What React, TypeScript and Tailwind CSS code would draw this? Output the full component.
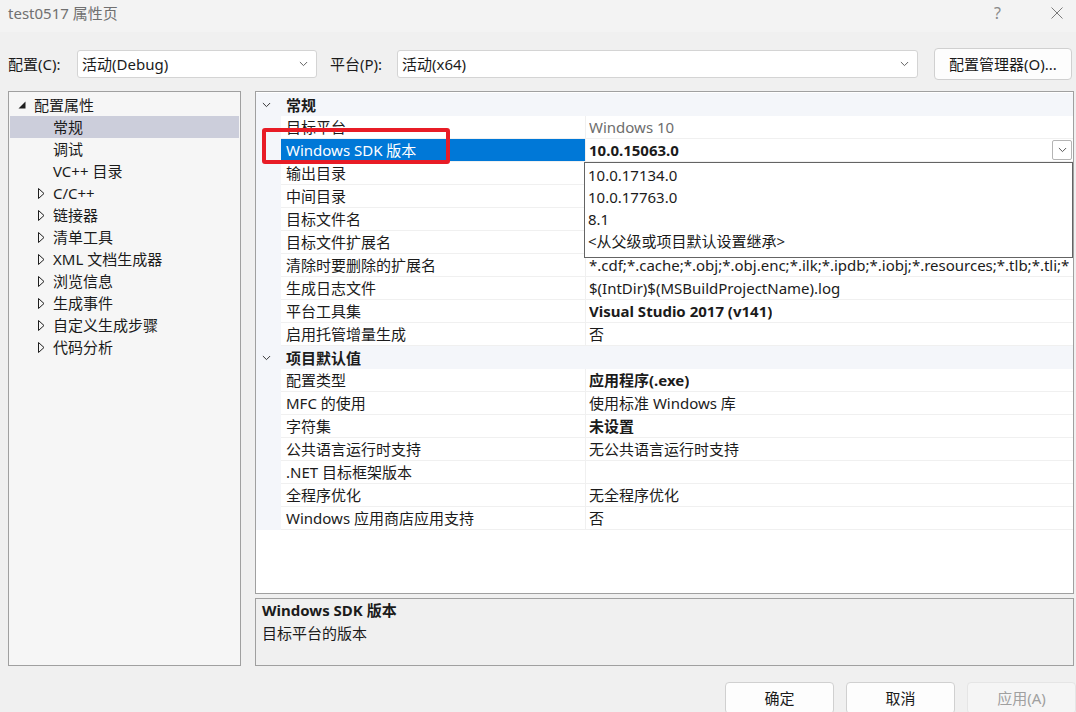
import React from "react";

const font = "font-['Noto_Sans','Noto_Sans_CJK_SC',sans-serif]";

type TreeItem = { label: string; collapsed?: boolean; selected?: boolean };

const treeItems: TreeItem[] = [
  { label: "常规", selected: true },
  { label: "调试" },
  { label: "VC++ 目录" },
  { label: "C/C++", collapsed: true },
  { label: "链接器", collapsed: true },
  { label: "清单工具", collapsed: true },
  { label: "XML 文档生成器", collapsed: true },
  { label: "浏览信息", collapsed: true },
  { label: "生成事件", collapsed: true },
  { label: "自定义生成步骤", collapsed: true },
  { label: "代码分析", collapsed: true },
];

type Row =
  | { kind: "cat"; label: string }
  | {
      kind: "prop";
      name: string;
      value: string;
      bold?: boolean;
      dim?: boolean;
      selected?: boolean;
    };

const rows: Row[] = [
  { kind: "cat", label: "常规" },
  { kind: "prop", name: "目标平台", value: "Windows 10", dim: true },
  { kind: "prop", name: "Windows SDK 版本", value: "10.0.15063.0", bold: true, selected: true },
  { kind: "prop", name: "输出目录", value: "" },
  { kind: "prop", name: "中间目录", value: "" },
  { kind: "prop", name: "目标文件名", value: "" },
  { kind: "prop", name: "目标文件扩展名", value: "" },
  {
    kind: "prop",
    name: "清除时要删除的扩展名",
    value: "*.cdf;*.cache;*.obj;*.obj.enc;*.ilk;*.ipdb;*.iobj;*.resources;*.tlb;*.tli;*",
  },
  { kind: "prop", name: "生成日志文件", value: "$(IntDir)$(MSBuildProjectName).log" },
  { kind: "prop", name: "平台工具集", value: "Visual Studio 2017 (v141)", bold: true },
  { kind: "prop", name: "启用托管增量生成", value: "否" },
  { kind: "cat", label: "项目默认值" },
  { kind: "prop", name: "配置类型", value: "应用程序(.exe)", bold: true },
  { kind: "prop", name: "MFC 的使用", value: "使用标准 Windows 库" },
  { kind: "prop", name: "字符集", value: "未设置", bold: true },
  { kind: "prop", name: "公共语言运行时支持", value: "无公共语言运行时支持" },
  { kind: "prop", name: ".NET 目标框架版本", value: "" },
  { kind: "prop", name: "全程序优化", value: "无全程序优化" },
  { kind: "prop", name: "Windows 应用商店应用支持", value: "否" },
];

const sdkOptions = ["10.0.17134.0", "10.0.17763.0", "8.1", "<从父级或项目默认设置继承>"];

function Chevron({ className }: { className?: string }) {
  return (
    <svg viewBox="0 0 10 6" className={className} fill="none" stroke="currentColor" strokeWidth="1.1">
      <path d="M1 0.8l4 4 4-4" />
    </svg>
  );
}

function Combo({ text, width }: { text: string; width: string }) {
  return (
    <div
      className={`${width} h-[28px] flex items-center justify-between bg-white border border-[#d4d4d4] rounded-[3px] pl-[4px] pr-[8px]`}
    >
      <span className="leading-[20px]">{text}</span>
      <Chevron className="w-[9px] h-[6px] text-[#606060]" />
    </div>
  );
}

export default function App() {
  return (
    <div
      className={`${font} relative w-[1076px] h-[712px] overflow-hidden bg-[#f0f0f0] text-[15px] text-[#1b1b1b] flex flex-col`}
    >
      {/* title bar */}
      <div className="h-[32px] shrink-0 flex justify-between bg-[#f3f3f3]">
        <span className="pl-[8px] pt-[4px] leading-[18px] text-[#707070]">test0517 属性页</span>
        <div className="flex items-center h-[26px] gap-[50px] pr-[13px] text-[#8a8a8a]">
          <span className="text-[16px] leading-none">?</span>
          <svg viewBox="0 0 12 12" className="w-[12px] h-[12px]" stroke="#7a7a7a" strokeWidth="1">
            <path d="M0.5 0.5l11 11M11.5 0.5l-11 11" />
          </svg>
        </div>
      </div>

      {/* config row */}
      <div className="mt-[16px] h-[32px] shrink-0 flex items-center pl-[8px]">
        <span className="w-[69px] leading-[20px]">配置(C):</span>
        <Combo text="活动(Debug)" width="w-[240px]" />
        <span className="ml-[13px] w-[67px] leading-[20px]">平台(P):</span>
        <Combo text="活动(x64)" width="w-[521px]" />
        <button className="ml-[16px] w-[138px] h-[32px] bg-[#fdfdfd] border border-[#d0d0d0] rounded-[4px] leading-[20px]">
          配置管理器(O)...
        </button>
      </div>

      {/* main */}
      <div className="mt-[11px] h-[575px] shrink-0 flex gap-[14px] pl-[8px]">
        {/* tree */}
        <div className="w-[233px] h-full border border-[#a0a0a0] bg-[#f6f6f6] pt-[2px] px-[1px]">
          <div className="h-[22px] flex items-center">
            <svg viewBox="0 0 8 8" className="ml-[8px] w-[8px] h-[8px]">
              <polygon points="7.5,0.5 7.5,7.5 0.5,7.5" fill="#1e1e1e" />
            </svg>
            <span className="ml-[8px] leading-[20px]">配置属性</span>
          </div>
          {treeItems.map((t) => (
            <div
              key={t.label}
              className={`h-[22px] flex items-center ${t.selected ? "bg-[#cccedb]" : ""}`}
            >
              {t.collapsed ? (
                <>
                  <svg viewBox="0 0 7 11" className="ml-[28px] w-[7px] h-[11px]">
                    <polygon points="0.5,0.5 6,5.5 0.5,10.5" fill="none" stroke="#1e1e1e" strokeWidth="1" />
                  </svg>
                  <span className="ml-[8px] leading-[20px]">{t.label}</span>
                </>
              ) : (
                <span className="ml-[43px] leading-[20px]">{t.label}</span>
              )}
            </div>
          ))}
        </div>

        {/* right column */}
        <div className="w-[819px] h-full flex flex-col gap-[4px]">
          <div className="h-[503px] border border-[#a0a0a0] bg-white pt-[1px] overflow-hidden">
            {rows.map((r, i) =>
              r.kind === "cat" ? (
                <div key={i} className="h-[23px] flex items-center bg-[#f4f6fa]">
                  <div className="w-[25px] pl-[6px]">
                    <Chevron className="w-[9px] h-[6px] text-[#333]" />
                  </div>
                  <span className="pl-[5px] font-bold leading-[20px]">{r.label}</span>
                </div>
              ) : (
                <div key={i} className="h-[23px] flex">
                  <div className="w-[25px] shrink-0 bg-[#f4f6fa]" />
                  <div
                    className={`w-[305px] shrink-0 flex items-center pl-[5px] border-b border-r border-[#f0f0f0] ${
                      r.selected ? "bg-[#0078d7] text-white border-[#0078d7]" : ""
                    }`}
                  >
                    <span className="leading-[20px] whitespace-nowrap">{r.name}</span>
                  </div>
                  <div className="relative flex-1 min-w-0 flex items-center pl-[3px] border-b border-[#f0f0f0]">
                    <span
                      className={`leading-[20px] whitespace-nowrap overflow-hidden ${r.bold ? "font-bold" : ""} ${
                        r.dim ? "text-[#6d6d6d]" : ""
                      }`}
                    >
                      {r.value}
                    </span>
                    {r.selected && (
                      <>
                        <div className="ml-auto mr-[1px] w-[20px] h-[20px] flex items-center justify-center border border-[#b4b4b4] rounded-[2px] bg-white">
                          <Chevron className="w-[9px] h-[6px] text-[#555]" />
                        </div>
                        <div className="absolute left-[-2px] top-[23px] z-10 w-[489px] h-[96px] bg-white border border-[#646464] pl-[3px] pt-[1px]">
                          {sdkOptions.map((o) => (
                            <div key={o} className="h-[22px] flex items-center leading-[20px]">
                              {o}
                            </div>
                          ))}
                        </div>
                      </>
                    )}
                  </div>
                </div>
              )
            )}
          </div>

          {/* description */}
          <div className="h-[68px] border border-[#a0a0a0] bg-[#f0f0f0] px-[6px]">
            <div className="h-[22px] flex items-center font-bold leading-[20px]">Windows SDK 版本</div>
            <div className="h-[23px] flex items-center leading-[20px]">目标平台的版本</div>
          </div>
        </div>
      </div>

      {/* buttons */}
      <div className="mt-[16px] h-[32px] shrink-0 flex justify-end gap-[12px]">
        <button className="w-[109px] h-[32px] bg-[#fdfdfd] border border-[#d0d0d0] rounded-[4px] leading-[20px]">
          确定
        </button>
        <button className="w-[109px] h-[32px] bg-[#fdfdfd] border border-[#d0d0d0] rounded-[4px] leading-[20px]">
          取消
        </button>
        <button className="w-[109px] h-[32px] bg-[#f5f5f5] border border-[#e5e5e5] rounded-[4px] leading-[20px] text-[#a0a0a0]">
          应用(A)
        </button>
      </div>

      {/* red annotation box */}
      <div className="absolute left-[262px] top-[128px] w-[188px] h-[36px] border-[4px] border-[#e81c26] rounded-[3px] pointer-events-none" />
    </div>
  );
}
